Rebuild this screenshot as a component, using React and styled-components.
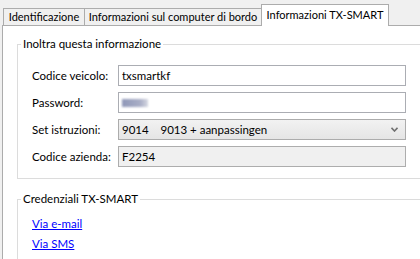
import React from "react";
import styled, { createGlobalStyle } from "styled-components";

const Global = createGlobalStyle`
  body {
    margin: 0;
    background: #f0f0f0;
    font-family: "Lato", "Liberation Sans", sans-serif;
    font-size: 11.5px;
    color: #000;
  }
`;

const Window = styled.div`
  width: 420px;
  height: 259px;
  overflow: hidden;
  padding: 4px 0 0 2px;
  box-sizing: border-box;
  background: #f0f0f0;
`;

const TabStrip = styled.div`
  display: flex;
  align-items: flex-end;
  height: 21px;
  margin-left: 1px;
`;

const Tab = styled.div`
  box-sizing: border-box;
  width: ${(p) => p.w}px;
  height: ${(p) => (p.active ? 22 : 17)}px;
  margin-left: ${(p) => (p.first ? 0 : -1)}px;
  margin-bottom: ${(p) => (p.active ? -1 : 0)}px;
  border: 1px solid #acacac;
  border-bottom: none;
  background: ${(p) => (p.active ? "#fff" : "#f0f0f0")};
  display: flex;
  justify-content: center;
  align-items: ${(p) => (p.active ? "flex-start" : "center")};
  padding-top: ${(p) => (p.active ? 3 : 0)}px;
  font-size: 11px;
  line-height: 14px;
  white-space: nowrap;
  position: relative;
  z-index: ${(p) => (p.active ? 1 : 0)};
`;

const Panel = styled.div`
  width: 460px;
  height: 240px;
  background: #fff;
  border-top: 1px solid #acacac;
  border-left: 1px solid #acacac;
  padding-left: 14px;
  box-sizing: border-box;
`;

const Group = styled.fieldset`
  margin: ${(p) => p.top}px 0 0 0;
  padding: 0 0 ${(p) => p.bottom}px 3px;
  border: 1px solid #dcdcdc;
  min-width: 0;
`;

const Legend = styled.legend`
  padding: 0 2px;
  line-height: 14px;
`;

const Rows = styled.div`
  display: grid;
  grid-template-columns: 86px 288px;
  grid-auto-rows: 21px;
  row-gap: 6px;
  align-items: center;
  padding: 14px 0 0 11px;
`;

const Label = styled.span`
  line-height: 14px;
`;

const Field = styled.div`
  box-sizing: border-box;
  height: 21px;
  border: 1px solid ${(p) => (p.disabled ? "#adadad" : "#abadb3")};
  background: ${(p) => (p.disabled ? "#f0f0f0" : "#fff")};
  display: flex;
  align-items: center;
  padding-left: 3px;
  line-height: 14px;
`;

const Blur = styled.span`
  width: 26px;
  height: 8px;
  background: linear-gradient(90deg, #8f97b8, #a9aec6 70%, #d6d8e2);
  filter: blur(1.2px);
`;

const Select = styled.div`
  box-sizing: border-box;
  height: 21px;
  border: 1px solid #acacac;
  background: linear-gradient(#f2f2f2, #e5e5e5);
  display: flex;
  align-items: center;
  justify-content: space-between;
  padding: 0 7px 0 3px;
  line-height: 14px;
  white-space: pre;
`;

const Links = styled.div`
  display: flex;
  flex-direction: column;
  gap: 6px;
  padding: 11px 0 0 11px;
`;

const Link = styled.a`
  color: #0000ff;
  text-decoration: underline;
  line-height: 14px;
  align-self: flex-start;
  cursor: pointer;
`;

const Chevron = () => (
  <svg width="7" height="5" viewBox="0 0 7 5">
    <path d="M0.5 0.8 L3.5 4 L6.5 0.8" fill="none" stroke="#6f6f6f" strokeWidth="1.6" />
  </svg>
);

export default function App() {
  return (
    <Window>
      <Global />
      <TabStrip>
        <Tab first w={82}>Identificazione</Tab>
        <Tab w={178}>Informazioni sul computer di bordo</Tab>
        <Tab active w={128}>Informazioni TX-SMART</Tab>
      </TabStrip>
      <Panel>
        <Group top={11} bottom={11}>
          <Legend>Inoltra questa informazione</Legend>
          <Rows>
            <Label>Codice veicolo:</Label>
            <Field>txsmartkf</Field>
            <Label>Password:</Label>
            <Field>
              <Blur />
            </Field>
            <Label>Set istruzioni:</Label>
            <Select>
              <span>{"9014    9013 + aanpassingen"}</span>
              <Chevron />
            </Select>
            <Label>Codice azienda:</Label>
            <Field disabled>F2254</Field>
          </Rows>
        </Group>
        <Group top={13} bottom={40}>
          <Legend>Credenziali TX-SMART</Legend>
          <Links>
            <Link>Via e-mail</Link>
            <Link>Via SMS</Link>
          </Links>
        </Group>
      </Panel>
    </Window>
  );
}
